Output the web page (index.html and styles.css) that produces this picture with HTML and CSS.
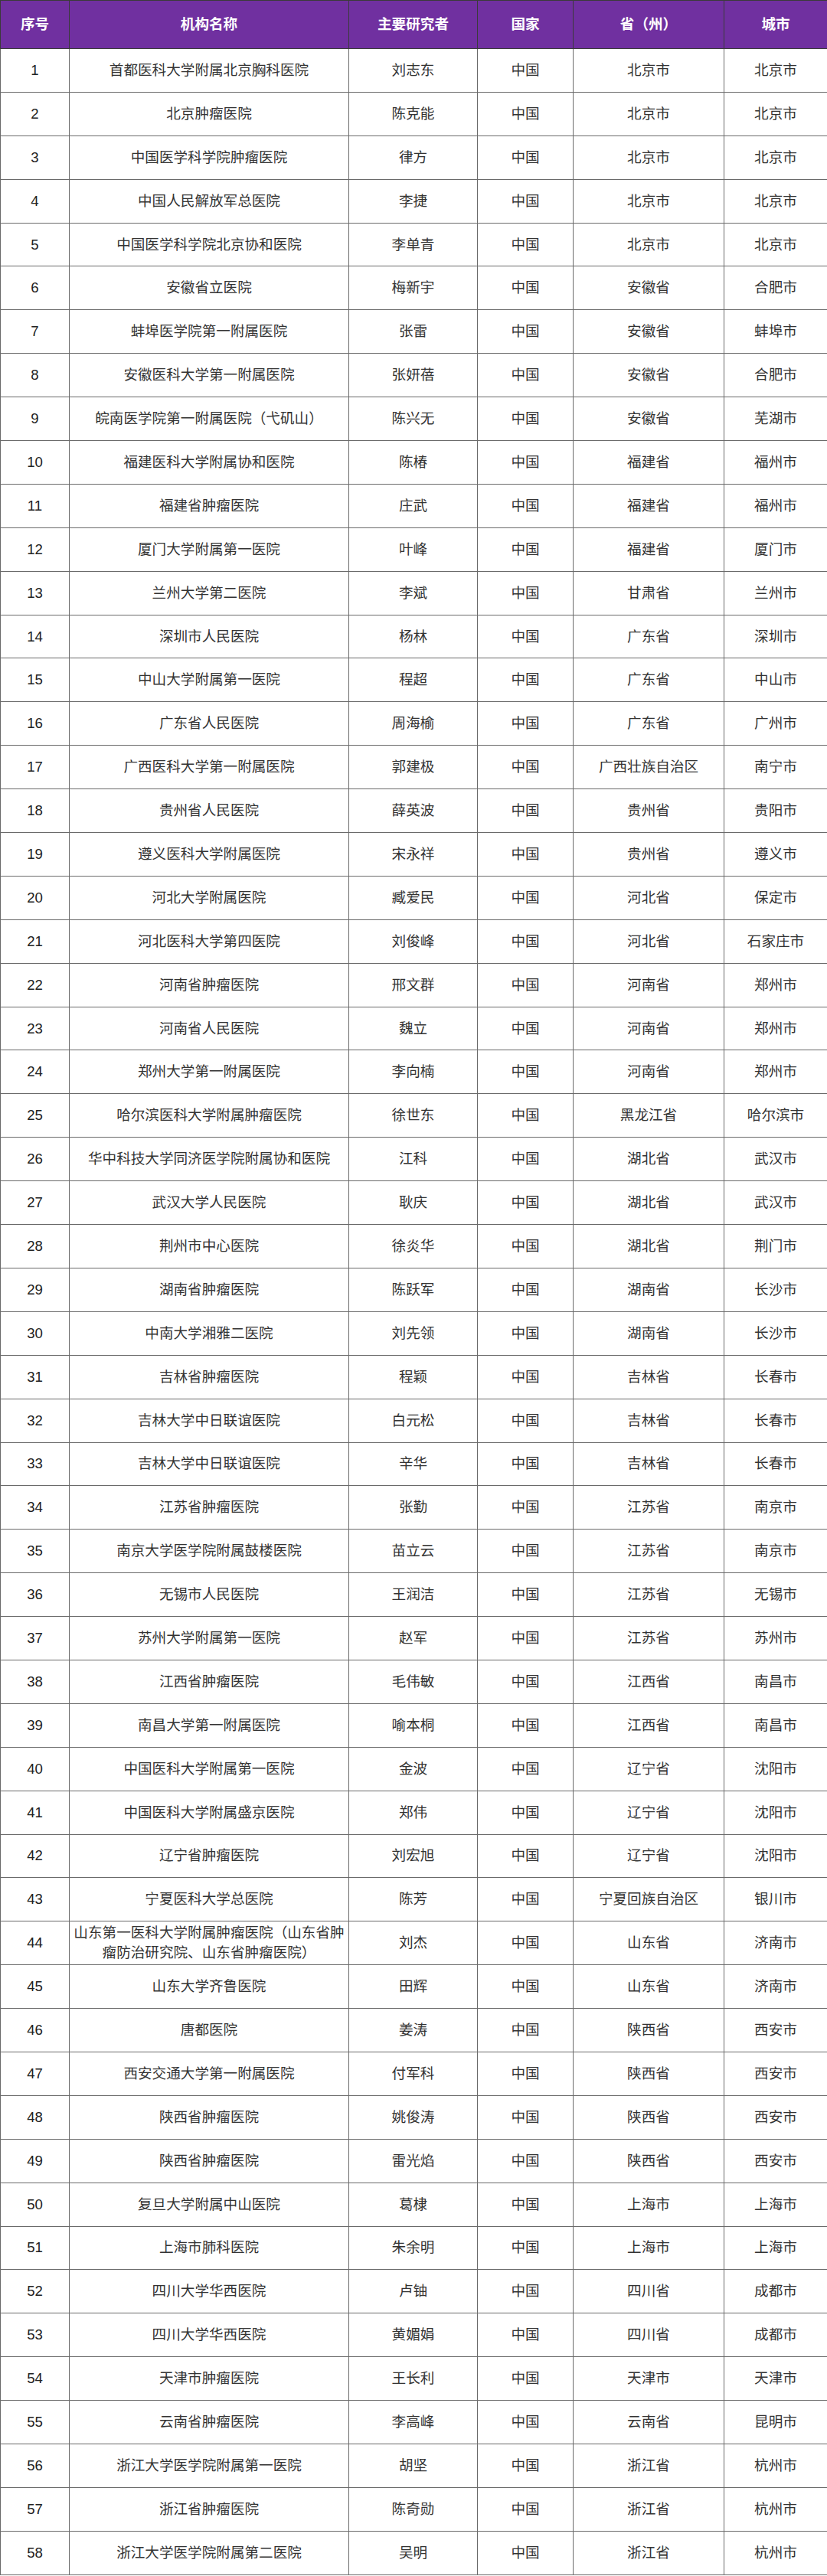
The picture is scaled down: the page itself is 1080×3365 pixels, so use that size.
FILE: index.html
```html
<!DOCTYPE html>
<html lang="zh-CN">
<head>
<meta charset="utf-8">
<title>研究中心列表</title>
<link rel="stylesheet" href="styles.css">
</head>
<body>
<table class="sites">
<colgroup>
<col class="c-no"><col class="c-inst"><col class="c-pi"><col class="c-country"><col class="c-prov"><col class="c-city">
</colgroup>
<thead>
<tr><th>序号</th><th>机构名称</th><th>主要研究者</th><th>国家</th><th>省（州）</th><th>城市</th></tr>
</thead>
<tbody>
<tr><td class="num">1</td><td>首都医科大学附属北京胸科医院</td><td>刘志东</td><td>中国</td><td>北京市</td><td>北京市</td></tr>
<tr><td class="num">2</td><td>北京肿瘤医院</td><td>陈克能</td><td>中国</td><td>北京市</td><td>北京市</td></tr>
<tr><td class="num">3</td><td>中国医学科学院肿瘤医院</td><td>律方</td><td>中国</td><td>北京市</td><td>北京市</td></tr>
<tr><td class="num">4</td><td>中国人民解放军总医院</td><td>李捷</td><td>中国</td><td>北京市</td><td>北京市</td></tr>
<tr><td class="num">5</td><td>中国医学科学院北京协和医院</td><td>李单青</td><td>中国</td><td>北京市</td><td>北京市</td></tr>
<tr><td class="num">6</td><td>安徽省立医院</td><td>梅新宇</td><td>中国</td><td>安徽省</td><td>合肥市</td></tr>
<tr><td class="num">7</td><td>蚌埠医学院第一附属医院</td><td>张雷</td><td>中国</td><td>安徽省</td><td>蚌埠市</td></tr>
<tr><td class="num">8</td><td>安徽医科大学第一附属医院</td><td>张妍蓓</td><td>中国</td><td>安徽省</td><td>合肥市</td></tr>
<tr><td class="num">9</td><td>皖南医学院第一附属医院（弋矶山）</td><td>陈兴无</td><td>中国</td><td>安徽省</td><td>芜湖市</td></tr>
<tr><td class="num">10</td><td>福建医科大学附属协和医院</td><td>陈椿</td><td>中国</td><td>福建省</td><td>福州市</td></tr>
<tr><td class="num">11</td><td>福建省肿瘤医院</td><td>庄武</td><td>中国</td><td>福建省</td><td>福州市</td></tr>
<tr><td class="num">12</td><td>厦门大学附属第一医院</td><td>叶峰</td><td>中国</td><td>福建省</td><td>厦门市</td></tr>
<tr><td class="num">13</td><td>兰州大学第二医院</td><td>李斌</td><td>中国</td><td>甘肃省</td><td>兰州市</td></tr>
<tr><td class="num">14</td><td>深圳市人民医院</td><td>杨林</td><td>中国</td><td>广东省</td><td>深圳市</td></tr>
<tr><td class="num">15</td><td>中山大学附属第一医院</td><td>程超</td><td>中国</td><td>广东省</td><td>中山市</td></tr>
<tr><td class="num">16</td><td>广东省人民医院</td><td>周海榆</td><td>中国</td><td>广东省</td><td>广州市</td></tr>
<tr><td class="num">17</td><td>广西医科大学第一附属医院</td><td>郭建极</td><td>中国</td><td>广西壮族自治区</td><td>南宁市</td></tr>
<tr><td class="num">18</td><td>贵州省人民医院</td><td>薛英波</td><td>中国</td><td>贵州省</td><td>贵阳市</td></tr>
<tr><td class="num">19</td><td>遵义医科大学附属医院</td><td>宋永祥</td><td>中国</td><td>贵州省</td><td>遵义市</td></tr>
<tr><td class="num">20</td><td>河北大学附属医院</td><td>臧爱民</td><td>中国</td><td>河北省</td><td>保定市</td></tr>
<tr><td class="num">21</td><td>河北医科大学第四医院</td><td>刘俊峰</td><td>中国</td><td>河北省</td><td>石家庄市</td></tr>
<tr><td class="num">22</td><td>河南省肿瘤医院</td><td>邢文群</td><td>中国</td><td>河南省</td><td>郑州市</td></tr>
<tr><td class="num">23</td><td>河南省人民医院</td><td>魏立</td><td>中国</td><td>河南省</td><td>郑州市</td></tr>
<tr><td class="num">24</td><td>郑州大学第一附属医院</td><td>李向楠</td><td>中国</td><td>河南省</td><td>郑州市</td></tr>
<tr><td class="num">25</td><td>哈尔滨医科大学附属肿瘤医院</td><td>徐世东</td><td>中国</td><td>黑龙江省</td><td>哈尔滨市</td></tr>
<tr><td class="num">26</td><td>华中科技大学同济医学院附属协和医院</td><td>江科</td><td>中国</td><td>湖北省</td><td>武汉市</td></tr>
<tr><td class="num">27</td><td>武汉大学人民医院</td><td>耿庆</td><td>中国</td><td>湖北省</td><td>武汉市</td></tr>
<tr><td class="num">28</td><td>荆州市中心医院</td><td>徐炎华</td><td>中国</td><td>湖北省</td><td>荆门市</td></tr>
<tr><td class="num">29</td><td>湖南省肿瘤医院</td><td>陈跃军</td><td>中国</td><td>湖南省</td><td>长沙市</td></tr>
<tr><td class="num">30</td><td>中南大学湘雅二医院</td><td>刘先领</td><td>中国</td><td>湖南省</td><td>长沙市</td></tr>
<tr><td class="num">31</td><td>吉林省肿瘤医院</td><td>程颖</td><td>中国</td><td>吉林省</td><td>长春市</td></tr>
<tr><td class="num">32</td><td>吉林大学中日联谊医院</td><td>白元松</td><td>中国</td><td>吉林省</td><td>长春市</td></tr>
<tr><td class="num">33</td><td>吉林大学中日联谊医院</td><td>辛华</td><td>中国</td><td>吉林省</td><td>长春市</td></tr>
<tr><td class="num">34</td><td>江苏省肿瘤医院</td><td>张勤</td><td>中国</td><td>江苏省</td><td>南京市</td></tr>
<tr><td class="num">35</td><td>南京大学医学院附属鼓楼医院</td><td>苗立云</td><td>中国</td><td>江苏省</td><td>南京市</td></tr>
<tr><td class="num">36</td><td>无锡市人民医院</td><td>王润洁</td><td>中国</td><td>江苏省</td><td>无锡市</td></tr>
<tr><td class="num">37</td><td>苏州大学附属第一医院</td><td>赵军</td><td>中国</td><td>江苏省</td><td>苏州市</td></tr>
<tr><td class="num">38</td><td>江西省肿瘤医院</td><td>毛伟敏</td><td>中国</td><td>江西省</td><td>南昌市</td></tr>
<tr><td class="num">39</td><td>南昌大学第一附属医院</td><td>喻本桐</td><td>中国</td><td>江西省</td><td>南昌市</td></tr>
<tr><td class="num">40</td><td>中国医科大学附属第一医院</td><td>金波</td><td>中国</td><td>辽宁省</td><td>沈阳市</td></tr>
<tr><td class="num">41</td><td>中国医科大学附属盛京医院</td><td>郑伟</td><td>中国</td><td>辽宁省</td><td>沈阳市</td></tr>
<tr><td class="num">42</td><td>辽宁省肿瘤医院</td><td>刘宏旭</td><td>中国</td><td>辽宁省</td><td>沈阳市</td></tr>
<tr><td class="num">43</td><td>宁夏医科大学总医院</td><td>陈芳</td><td>中国</td><td>宁夏回族自治区</td><td>银川市</td></tr>
<tr><td class="num">44</td><td>山东第一医科大学附属肿瘤医院（山东省肿瘤防治研究院、山东省肿瘤医院）</td><td>刘杰</td><td>中国</td><td>山东省</td><td>济南市</td></tr>
<tr><td class="num">45</td><td>山东大学齐鲁医院</td><td>田辉</td><td>中国</td><td>山东省</td><td>济南市</td></tr>
<tr><td class="num">46</td><td>唐都医院</td><td>姜涛</td><td>中国</td><td>陕西省</td><td>西安市</td></tr>
<tr><td class="num">47</td><td>西安交通大学第一附属医院</td><td>付军科</td><td>中国</td><td>陕西省</td><td>西安市</td></tr>
<tr><td class="num">48</td><td>陕西省肿瘤医院</td><td>姚俊涛</td><td>中国</td><td>陕西省</td><td>西安市</td></tr>
<tr><td class="num">49</td><td>陕西省肿瘤医院</td><td>雷光焰</td><td>中国</td><td>陕西省</td><td>西安市</td></tr>
<tr><td class="num">50</td><td>复旦大学附属中山医院</td><td>葛棣</td><td>中国</td><td>上海市</td><td>上海市</td></tr>
<tr><td class="num">51</td><td>上海市肺科医院</td><td>朱余明</td><td>中国</td><td>上海市</td><td>上海市</td></tr>
<tr><td class="num">52</td><td>四川大学华西医院</td><td>卢铀</td><td>中国</td><td>四川省</td><td>成都市</td></tr>
<tr><td class="num">53</td><td>四川大学华西医院</td><td>黄媚娟</td><td>中国</td><td>四川省</td><td>成都市</td></tr>
<tr><td class="num">54</td><td>天津市肿瘤医院</td><td>王长利</td><td>中国</td><td>天津市</td><td>天津市</td></tr>
<tr><td class="num">55</td><td>云南省肿瘤医院</td><td>李高峰</td><td>中国</td><td>云南省</td><td>昆明市</td></tr>
<tr><td class="num">56</td><td>浙江大学医学院附属第一医院</td><td>胡坚</td><td>中国</td><td>浙江省</td><td>杭州市</td></tr>
<tr><td class="num">57</td><td>浙江省肿瘤医院</td><td>陈奇勋</td><td>中国</td><td>浙江省</td><td>杭州市</td></tr>
<tr><td class="num">58</td><td>浙江大学医学院附属第二医院</td><td>吴明</td><td>中国</td><td>浙江省</td><td>杭州市</td></tr>
</tbody>
</table>
</body>
</html>
```

FILE: styles.css
```css
html, body {
  margin: 0;
  padding: 0;
  background: #ffffff;
}

body {
  font-family: "Liberation Sans", "Noto Sans CJK SC", sans-serif;
  color: #333333;
}

.sites {
  width: 1080px;
  table-layout: fixed;
  border-collapse: collapse;
  font-size: 18.6px;
  line-height: 26px;
}

.c-no { width: 90px; }
.c-inst { width: 365px; }
.c-pi { width: 168px; }
.c-country { width: 125px; }
.c-prov { width: 197px; }
.c-city { width: 135px; }

.sites th,
.sites td {
  border: 1px solid #6a6a6a;
  text-align: center;
  vertical-align: middle;
  padding: 0 3px;
}

.sites thead tr {
  height: 63px;
}

.sites thead th {
  background: #7030a0;
  color: #ffffff;
  font-weight: bold;
  border-color: #3a3a3a;
}

.sites tbody tr {
  height: 56.9px;
}

.sites tbody td {
  color: #333333;
}

.sites td.num {
  color: #222222;
}
```
